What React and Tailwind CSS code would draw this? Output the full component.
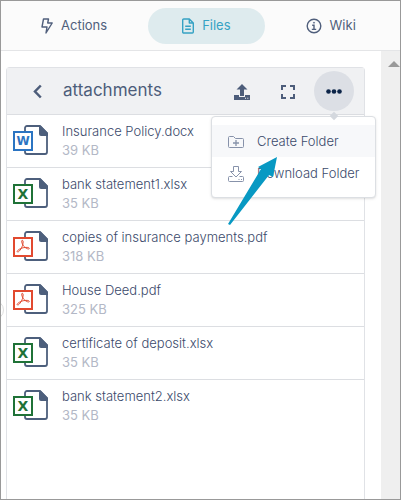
function Bolt() {
  return (
    <svg width="12" height="16" viewBox="0 0 12 16" fill="none" stroke="currentColor" strokeWidth="1.4" strokeLinejoin="round" aria-hidden="true">
      <path d="M2.500 1h5L6.700 5h4.500L5 15l1-6H1z" />
    </svg>
  );
}

function FileLines() {
  return (
    <svg width="12" height="16" viewBox="0 0 12 16" fill="none" stroke="currentColor" strokeWidth="1.400" strokeLinejoin="round" aria-hidden="true">
      <path d="M1.700 1h5.600L11.300 5v9a1 1 0 0 1-1 1H1.700a1 1 0 0 1-1-1V2a1 1 0 0 1 1-1zM7.300 1v4h4M3.200 8.300h5.600M3.200 11.300h5.600" />
    </svg>
  );
}

function InfoCircle() {
  return (
    <svg width="16" height="16" viewBox="0 0 16 16" fill="none" stroke="currentColor" strokeWidth="1.400" aria-hidden="true">
      <circle cx="8" cy="8" r="6.800" />
      <path d="M6.200 7.200H8v4M5.800 11.400h4.400" />
      <circle cx="8" cy="4.700" r=".6" fill="currentColor" strokeWidth=".6" />
    </svg>
  );
}

function BackIcon() {
  return (
    <svg width="10" height="16" viewBox="0 0 10 16" fill="none" stroke="currentColor" strokeWidth="2.500" aria-hidden="true">
      <path d="M7.800 2.500 2 8.500l5.800 6" />
    </svg>
  );
}

function UploadIcon() {
  return (
    <svg width="16" height="18" viewBox="0 -2 16 18" fill="currentColor" aria-hidden="true">
      <path d="M8 0l5.500 5.500H10V12H6V5.500H2.500zM0 11h5v2h6v-2h5v5H0zM11 13.800v1h1v-1zM13.300 13.800v1h1v-1z" fillRule="evenodd" />
    </svg>
  );
}

function ExpandIcon() {
  return (
    <svg width="14" height="16" viewBox="0 -2 14 16" fill="none" stroke="currentColor" strokeWidth="2" aria-hidden="true">
      <path d="M1 5V1h4M9 1h4v4M13 9v4H9M5 13H1V9" />
    </svg>
  );
}

function MoreIcon() {
  return (
    <svg width="16" height="6" viewBox="0 0 16 6" fill="currentColor" aria-hidden="true">
      <circle cx="2.500" cy="3.500" r="2.300" />
      <circle cx="8" cy="3.500" r="2.300" />
      <circle cx="13.500" cy="3.500" r="2.300" />
    </svg>
  );
}

function FolderPlus() {
  return (
    <svg width="16" height="12" viewBox="0 0 16 12" fill="none" stroke="currentColor" strokeLinejoin="round" aria-hidden="true">
      <path d="M1.500.5h4l2 2h7a1 1 0 0 1 1 1v7a1 1 0 0 1-1 1h-13a1 1 0 0 1-1-1v-9a1 1 0 0 1 1-1z" />
      <path d="M8 4v6M5 7h6" strokeWidth="1.300" />
    </svg>
  );
}

function DownloadTray() {
  return (
    <svg width="16" height="16" viewBox="0 0 16 16" fill="none" stroke="currentColor" strokeLinejoin="round" aria-hidden="true">
      <path d="M5.500.5h5v5h3L8 11 2.500 5.500h3zM4.500 10.500h-3a1 1 0 0 0-1 1v3a1 1 0 0 0 1 1h13a1 1 0 0 0 1-1v-3a1 1 0 0 0-1-1h-3M10.500 13.500h1M13 13.500h1" />
    </svg>
  );
}

const colors = { docx: "#2b74c2", xlsx: "#1f7237", pdf: "#e2492f" };

function Mark({ type }) {
  if (type === "pdf") {
    return (
      <path
        d="M9.300 9.300c1.300 0 .9 2.700.2 5.200-1 3-3.600 6.900-5 6.500-1.300-.7 1.600-3.300 5.400-4.200 3.200-.7 6.700-.6 6.400.7-.4 1.400-4.200-.5-5.900-2.700-1.300-1.900-2.500-5.500-1.100-5.500z"
        stroke={colors.pdf}
        strokeWidth="1"
      />
    );
  }
  return (
    <text
      x="10"
      y={type === "docx" ? 20 : 21}
      textAnchor="middle"
      fill={colors[type]}
      className={"font-['DejaVu_Sans',sans-serif] font-bold " + (type === "docx" ? "text-[12px]" : "text-[14px]")}
    >
      {type === "docx" ? "W" : "X"}
    </text>
  );
}

function FileIcon({ type }) {
  return (
    <svg className="shrink-0" width="36" height="30" viewBox="0 0 36 30" fill="none" aria-hidden="true">
      <path d="M12 7V3a2 2 0 0 1 2-2h13l7 7v19a2 2 0 0 1-2 2H14a2 2 0 0 1-2-2v-3" stroke="#4d5f7c" strokeWidth="1.800" />
      <path d="M26 1v8a2 2 0 0 0 2 2h7V8l-7-7z" fill="#4d5f7c" />
      <rect x="1" y="7" width="18" height="18" fill="#fff" stroke={colors[type]} strokeWidth="2" />
      <Mark type={type} />
    </svg>
  );
}

const files = [
  ["Insurance Policy.docx", "39 KB", "docx"],
  ["bank statement1.xlsx", "35 KB", "xlsx"],
  ["copies of insurance payments.pdf", "318 KB", "pdf"],
  ["House Deed.pdf", "325 KB", "pdf"],
  ["certificate of deposit.xlsx", "35 KB", "xlsx"],
  ["bank statement2.xlsx", "35 KB", "xlsx"],
];

function Tab({ icon, label, active }) {
  return (
    <button type="button" className={"flex h-9 items-center gap-2 rounded-full px-[34px] text-[13px] " + (active ? "bg-[#deebee] text-[#36a2c4]" : "text-[#505f7c]")}>
      {icon}
      {label}
    </button>
  );
}

export default function App() {
  return (
    <div className="relative flex h-screen flex-col overflow-hidden border border-[#999] bg-white font-['Inter',sans-serif] text-[#3b4a6b]">
      <nav className="flex h-[50px] shrink-0 items-center gap-[7px] border-b border-[#e4e5e7] bg-[#fbfbfb] px-1.5">
        <Tab icon={<Bolt />} label="Actions" />
        <Tab icon={<FileLines />} label="Files" active />
        <Tab icon={<InfoCircle />} label="Wiki" />
      </nav>
      <div className="flex min-h-0 flex-1">
        <main className="min-w-0 flex-1 pl-[5px] pr-4 pt-4">
          <section className="h-full rounded-t border-x border-t border-[#e0e2e6]">
            <header className="flex h-[47px] items-center border-b border-[#dcdee2] bg-[#f0f1f3] pl-[26px] text-[#4d5d7a]">
              <button type="button" aria-label="Back"><BackIcon /></button>
              <h1 className="ml-5 flex-1 text-[17px]">attachments</h1>
              <button type="button" aria-label="Upload"><UploadIcon /></button>
              <button type="button" aria-label="Full screen" className="ml-[31px]"><ExpandIcon /></button>
              <div className="relative ml-[19px] mr-2.5">
                <button type="button" aria-label="More" className="flex size-10 items-center justify-center rounded-full bg-[#dcdfe5] text-[#0c2448]"><MoreIcon /></button>
                <div className="absolute -right-[22px] top-[45px] z-10 w-[165px] rounded border border-[#dcdfe3] bg-white py-2 shadow-sm">
                  <span className="absolute -top-1 right-[38px] size-1.5 rotate-45 bg-[#d4d8de]" />
                  <div className="relative bg-white text-[13px] font-light text-[#3b4a6b]">
                    <button type="button" className="flex h-8 w-full items-center gap-[13px] bg-[#f7f8fa] pl-4 pt-0.5"><span className="text-[#8792aa]"><FolderPlus /></span>Create Folder</button>
                    <button type="button" className="flex h-8 w-full items-center gap-[13px] pl-4 pt-0.5"><span className="text-[#8792aa]"><DownloadTray /></span>Download Folder</button>
                  </div>
                  <svg className="pointer-events-none absolute left-4 top-10" width="50" height="70" viewBox="0 0 50 70" aria-hidden="true">
                    <path d="M49 0L45 20L41 18L2 68L0 67L33 12L30 10z" fill="#0899c3" />
                  </svg>
                </div>
              </div>
            </header>
            <ul>
              {files.map(([name, size, type]) => (
                <li key={name} className="flex h-[53px] items-center gap-[13px] border-b border-[#dcdee2] pb-0.5 pl-1.5 last:border-transparent">
                  <FileIcon type={type} />
                  <div className="pt-0.5 text-[13px] font-light leading-[19px]">
                    <p>{name}</p>
                    <p className="font-normal text-[#b3b8c6]">{size}</p>
                  </div>
                </li>
              ))}
            </ul>
          </section>
        </main>
        <div className="flex w-[19px] shrink-0 justify-center bg-[#efefef] pl-1.5 pt-2.5" aria-hidden="true">
          <svg className="shrink-0" width="12" height="6" viewBox="0 0 12 6"><path d="M6 0l6 6H0z" fill="#999" /></svg>
        </div>
      </div>
      <span className="absolute -left-[17px] top-[299px] size-5 rounded-full border border-[#dedede]" />
    </div>
  );
}
